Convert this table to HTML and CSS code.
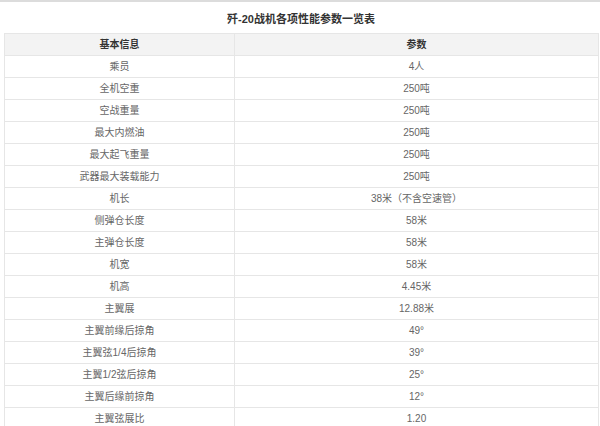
FILE: index.html
```html
<!DOCTYPE html>
<html lang="zh-CN">
<head>
<meta charset="utf-8">
<title>歼-20战机各项性能参数一览表</title>
<link rel="stylesheet" href="styles.css">
</head>
<body>
<div class="page">
  <h1 class="title">歼-20战机各项性能参数一览表</h1>
  <table class="spec">
    <colgroup><col class="c1"><col class="c2"></colgroup>
    <thead>
      <tr><th>基本信息</th><th>参数</th></tr>
    </thead>
    <tbody>
      <tr><td>乘员</td><td>4人</td></tr>
      <tr><td>全机空重</td><td>250吨</td></tr>
      <tr><td>空战重量</td><td>250吨</td></tr>
      <tr><td>最大内燃油</td><td>250吨</td></tr>
      <tr><td>最大起飞重量</td><td>250吨</td></tr>
      <tr><td>武器最大装载能力</td><td>250吨</td></tr>
      <tr><td>机长</td><td>38米（不含空速管）</td></tr>
      <tr><td>侧弹仓长度</td><td>58米</td></tr>
      <tr><td>主弹仓长度</td><td>58米</td></tr>
      <tr><td>机宽</td><td>58米</td></tr>
      <tr><td>机高</td><td>4.45米</td></tr>
      <tr><td>主翼展</td><td>12.88米</td></tr>
      <tr><td>主翼前缘后掠角</td><td>49°</td></tr>
      <tr><td>主翼弦1/4后掠角</td><td>39°</td></tr>
      <tr><td>主翼1/2弦后掠角</td><td>25°</td></tr>
      <tr><td>主翼后缘前掠角</td><td>12°</td></tr>
      <tr><td>主翼弦展比</td><td>1.20</td></tr>
    </tbody>
  </table>
</div>
</body>
</html>
```
FILE: styles.css
```css
html, body {
  margin: 0;
  padding: 0;
  background: #fff;
}
body {
  font-family: "Liberation Sans", "Noto Sans CJK SC", sans-serif;
  color: #666;
}
.page {
  border-top: 2px solid #dcdcdc;
  padding: 0 2px 0 4px;
}
.title {
  margin: 0;
  padding: 9px 0 6px;
  line-height: 16px;
  font-size: 11px;
  font-weight: bold;
  color: #333;
  text-align: center;
}
.spec {
  width: 594px;
  border-collapse: collapse;
  table-layout: fixed;
  font-size: 10px;
}
.spec .c1 { width: 230px; }
.spec .c2 { width: 364px; }
.spec th,
.spec td {
  height: 21px;
  padding: 0;
  border: 1px solid #e6e6e6;
  text-align: center;
  vertical-align: middle;
  line-height: 14px;
}
.spec th {
  background: #f3f3f3;
  color: #333;
  font-weight: bold;
}
```
